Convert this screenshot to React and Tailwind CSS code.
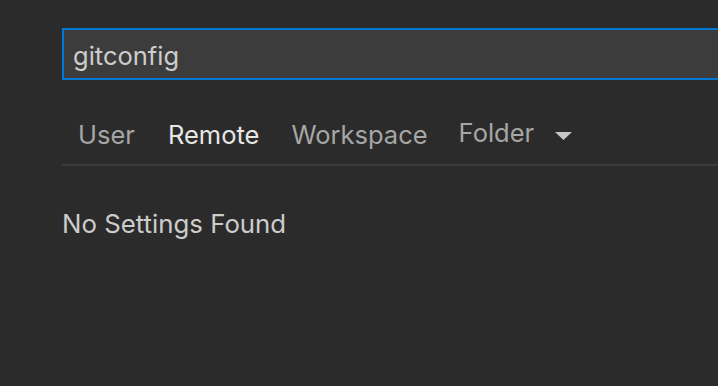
export default function App() {
  const font = { fontFamily: 'Inter, "Noto Sans", sans-serif' };
  return (
    <div className="w-[718px] h-[386px] bg-[#2b2b2b] overflow-hidden" style={font}>
      <div className="pl-[62px] pt-[28px]">
        <div className="h-[52px] border-2 border-[#0078d4] bg-[#3c3c3c] flex items-center pl-[9px] pt-[3px] -mr-[20px]">
          <span className="text-[25.5px] text-[#cccccc] leading-none">gitconfig</span>
        </div>
        <div className="mt-[30px] h-[56px] border-b-2 border-[#3a3a3a] -mr-[20px]">
          <div className="flex items-start pl-[16px] pt-[12px] text-[25.5px] leading-none">
            <span className="text-[#a6a6a6]">User</span>
            <span className="text-[#e7e7e7] ml-[33px]">Remote</span>
            <span className="text-[#a6a6a6] ml-[32px]">Workspace</span>
            <span className="flex items-start text-[#a6a6a6] -mt-[2px] ml-[31px]">
              Folder
              <svg width="17" height="8" viewBox="0 0 17 8" className="ml-[21px] mt-[12px]">
                <path d="M0 0 L17 0 L8.5 8 Z" fill="#c5c5c5" />
              </svg>
            </span>
          </div>
        </div>
        <div className="mt-[45px] text-[25.8px] leading-none text-[#cccccc]">No Settings Found</div>
      </div>
    </div>
  );
}
